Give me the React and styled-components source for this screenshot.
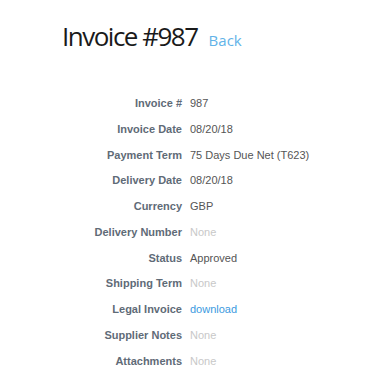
import React from "react";
import styled, { createGlobalStyle } from "styled-components";

const Global = createGlobalStyle`
  html, body { margin: 0; padding: 0; background: #fff; }
  body { font-family: "Liberation Sans", Arial, sans-serif; }
`;

const Page = styled.div`
  width: 380px;
  height: 389px;
  box-sizing: border-box;
  padding: 17px 0 0 62px;
`;

const Header = styled.div`
  display: flex;
  align-items: baseline;
  gap: 11px;
`;

const Title = styled.h1`
  margin: 0;
  font-family: "Open Sans", sans-serif;
  font-weight: 400;
  font-size: 26px;
  letter-spacing: -1.5px;
  line-height: 38px;
  color: #1a1a1a;
`;

const BackLink = styled.a`
  font-family: "Open Sans", sans-serif;
  font-size: 15px;
  color: #62b3e8;
  text-decoration: none;
`;

const Details = styled.dl`
  margin: 40px 0 0 -22px;
  display: grid;
  grid-template-columns: 142px auto;
  column-gap: 8px;
  row-gap: 8px;
  font-size: 11px;
  line-height: 17.75px;
`;

const Label = styled.dt`
  margin: 0;
  text-align: right;
  font-weight: 700;
  color: #5f6b77;
`;

const Value = styled.dd`
  margin: 0;
  color: ${(p) => (p.$muted ? "#c8c8c8" : p.$link ? "#3b9ae0" : "#555")};
`;

const rows = [
  ["Invoice #", "987"],
  ["Invoice Date", "08/20/18"],
  ["Payment Term", "75 Days Due Net (T623)"],
  ["Delivery Date", "08/20/18"],
  ["Currency", "GBP"],
  ["Delivery Number", "None", "muted"],
  ["Status", "Approved"],
  ["Shipping Term", "None", "muted"],
  ["Legal Invoice", "download", "link"],
  ["Supplier Notes", "None", "muted"],
  ["Attachments", "None", "muted"],
];

export default function App() {
  return (
    <Page>
      <Global />
      <Header>
        <Title>Invoice #987</Title>
        <BackLink href="#">Back</BackLink>
      </Header>
      <Details>
        {rows.map(([l, v, k]) => (
          <React.Fragment key={l}>
            <Label>{l}</Label>
            <Value $muted={k === "muted"} $link={k === "link"}>
              {v}
            </Value>
          </React.Fragment>
        ))}
      </Details>
    </Page>
  );
}
